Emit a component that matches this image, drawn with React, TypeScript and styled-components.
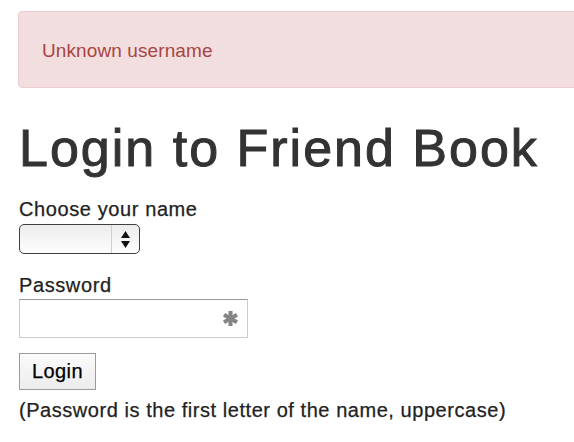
import React from "react";
import styled, { createGlobalStyle } from "styled-components";

const GlobalStyle = createGlobalStyle`
  html, body {
    margin: 0;
    padding: 0;
    background: #ffffff;
    overflow: hidden;
  }
  body {
    font-family: "Liberation Sans", Arial, Helvetica, sans-serif;
    color: #333333;
  }
`;

const Page = styled.div`
  width: 700px;
  padding: 11px 0 0 18px;
  box-sizing: border-box;
`;

const Alert = styled.div`
  box-sizing: border-box;
  height: 77px;
  padding: 2px 0 0 23px;
  display: flex;
  align-items: center;
  background: #f2dede;
  border: 1px solid #ebccd1;
  border-radius: 4px;
  color: #a94442;
  font-size: 19px;
  letter-spacing: 0.1px;
`;

const Form = styled.form`
  display: flex;
  flex-direction: column;
  align-items: flex-start;
  padding-left: 1px;
`;

const Title = styled.h1`
  margin: 32px 0 0;
  font-size: 52px;
  line-height: 56px;
  font-weight: 500;
  letter-spacing: 2px;
  -webkit-text-stroke: 1px #333333;
  color: #333333;
`;

const Label = styled.label<{ $gap: number }>`
  display: block;
  margin-top: ${(p) => p.$gap}px;
  font-size: 20px;
  line-height: 22px;
  letter-spacing: 0.6px;
  -webkit-text-stroke: 0.25px #222222;
  color: #222222;
`;

const SelectBox = styled.div`
  margin-top: 4px;
  box-sizing: border-box;
  width: 121px;
  height: 30px;
  display: flex;
  border: 1px solid #3f3f3f;
  border-radius: 5px;
  background: linear-gradient(#ececec, #f7f7f7 60%, #fdfdfd);
  overflow: hidden;
`;

const SelectValue = styled.div`
  flex: 1;
`;

const SelectArrows = styled.div`
  width: 27px;
  border-left: 1px solid #cfcfcf;
  display: flex;
  align-items: center;
  justify-content: center;
`;

const PasswordField = styled.div`
  margin-top: 3px;
  box-sizing: border-box;
  width: 229px;
  height: 39px;
  display: flex;
  align-items: center;
  justify-content: flex-end;
  padding-right: 9px;
  border: 1px solid #cccccc;
  border-top-color: #9a9a9a;
  background: #ffffff;
`;

const Button = styled.button`
  margin-top: 15px;
  box-sizing: border-box;
  width: 77px;
  height: 37px;
  padding: 0;
  border: 1px solid #9b9b9b;
  background: linear-gradient(#fbfbfb, #ececec);
  font-family: "Liberation Sans", Arial, Helvetica, sans-serif;
  font-size: 20px;
  letter-spacing: 0.4px;
  -webkit-text-stroke: 0.25px #000000;
  color: #000000;
`;

const Hint = styled.p`
  margin: 9px 0 0;
  font-size: 20px;
  line-height: 22px;
  letter-spacing: 0.55px;
  -webkit-text-stroke: 0.25px #222222;
  color: #222222;
`;

const Arrows = () => (
  <svg width="9" height="17" viewBox="0 0 9 17">
    <path d="M4.5 0 L9 7 L0 7 Z" fill="#111" />
    <path d="M0 10 L9 10 L4.5 17 Z" fill="#111" />
  </svg>
);

const KeyAsterisk = () => (
  <svg width="15" height="15" viewBox="0 0 14 14">
    <g stroke="#858585" strokeWidth="3.8" strokeLinecap="butt">
      <line x1="7" y1="0" x2="7" y2="14" />
      <line x1="0.9" y1="3.5" x2="13.1" y2="10.5" />
      <line x1="0.9" y1="10.5" x2="13.1" y2="3.5" />
    </g>
  </svg>
);

export default function App() {
  return (
    <>
      <GlobalStyle />
      <Page>
        <Alert>Unknown username</Alert>
        <Form onSubmit={(e) => e.preventDefault()}>
          <Title>Login to Friend Book</Title>
          <Label $gap={22}>Choose your name</Label>
          <SelectBox>
            <SelectValue />
            <SelectArrows>
              <Arrows />
            </SelectArrows>
          </SelectBox>
          <Label $gap={20}>Password</Label>
          <PasswordField>
            <KeyAsterisk />
          </PasswordField>
          <Button type="submit">Login</Button>
          <Hint>(Password is the first letter of the name, uppercase)</Hint>
        </Form>
      </Page>
    </>
  );
}
